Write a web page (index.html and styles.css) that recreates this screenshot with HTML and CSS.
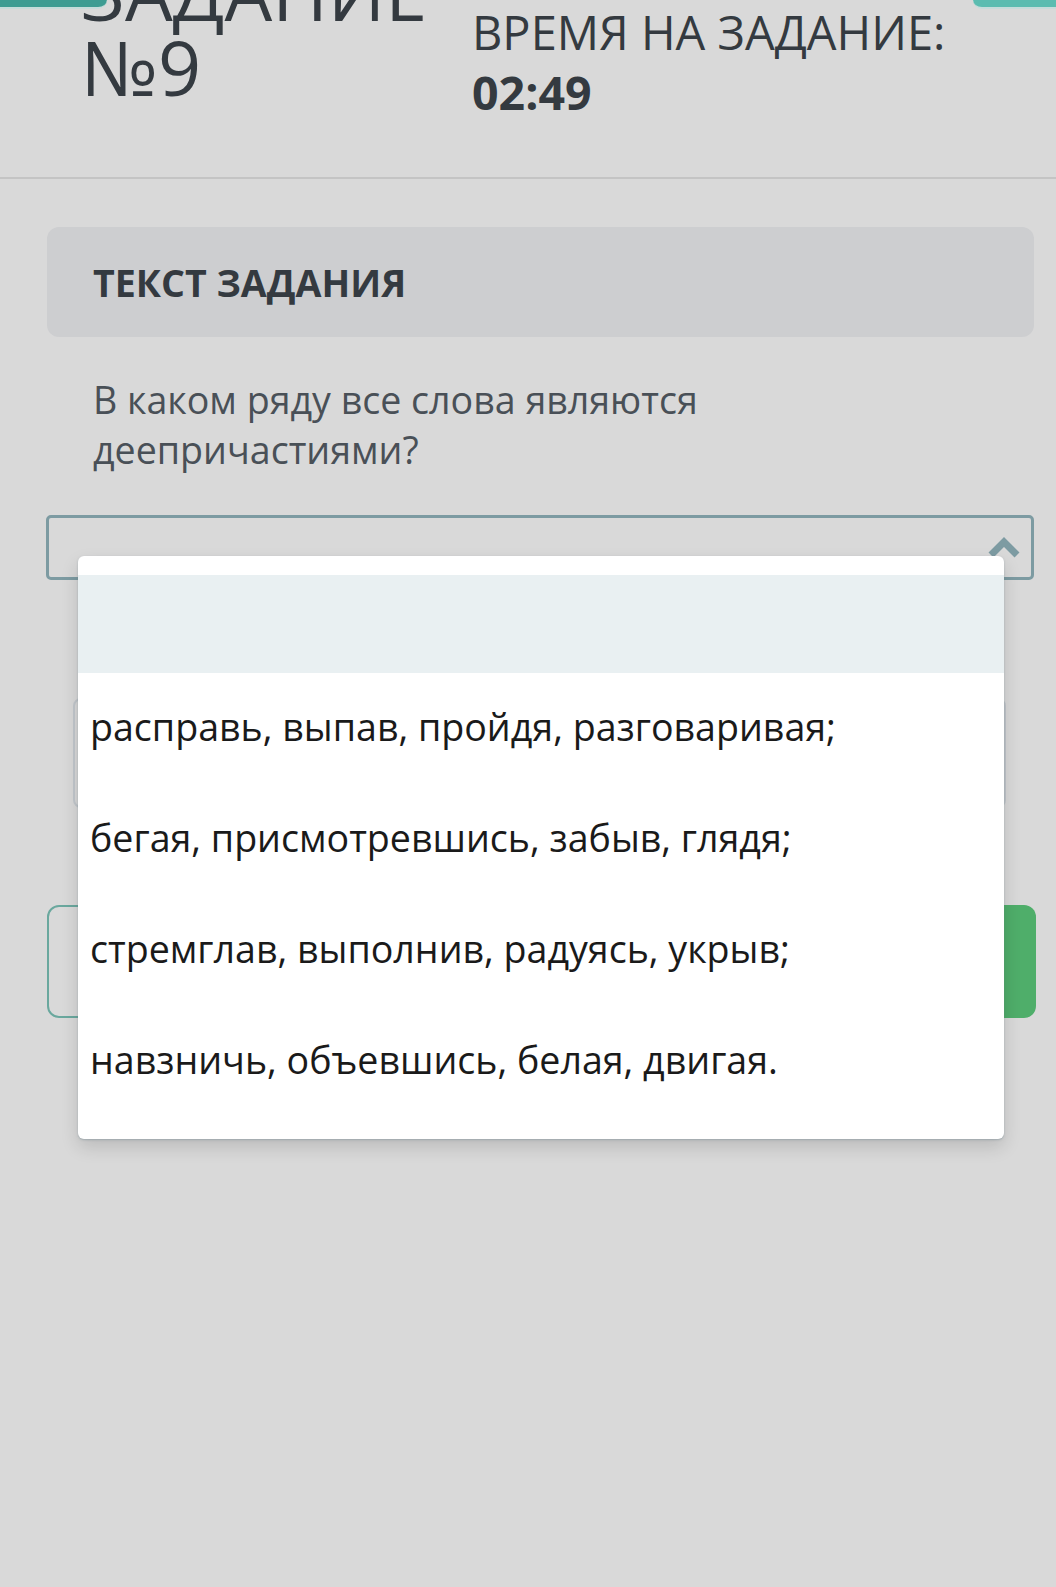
FILE: index.html
```html
<!DOCTYPE html>
<html lang="ru">
<head>
<meta charset="utf-8">
<title>Задание №9</title>
<link rel="stylesheet" href="styles.css">
</head>
<body>
<div class="tab tab-left"></div>
<div class="tab tab-right"></div>
<header class="task-header">
  <h1 class="task-title">ЗАДАНИЕ №9</h1>
  <div class="timer">
    <div class="timer-label">ВРЕМЯ НА ЗАДАНИЕ:</div>
    <div class="timer-value">02:49</div>
  </div>
</header>
<main class="main">
  <div class="section-head">ТЕКСТ ЗАДАНИЯ</div>
  <p class="question">В каком ряду все слова являются деепричастиями?</p>
  <div class="select-wrap">
    <div class="select">
      <svg class="chevron" width="32" height="26" viewBox="0 0 32 26"><polyline points="3,20 16,7 29,20" fill="none" stroke="#7d9ba2" stroke-width="7"/></svg>
    </div>
    <ul class="dropdown">
      <li class="option option-empty"></li>
      <li class="option">расправь, выпав, пройдя, разговаривая;</li>
      <li class="option">бегая, присмотревшись, забыв, глядя;</li>
      <li class="option">стремглав, выполнив, радуясь, укрыв;</li>
      <li class="option">навзничь, объевшись, белая, двигая.</li>
    </ul>
  </div>
  <div class="answer-card"></div>
  <div class="buttons">
    <div class="btn btn-outline"></div>
    <div class="btn btn-green"></div>
  </div>
</main>
</body>
</html>
```
FILE: styles.css
```css
* { box-sizing: border-box; }
html, body {
  margin: 0;
  padding: 0;
}
body {
  background: #d9d9d9;
  font-family: "Open Sans", "Noto Sans", sans-serif;
  color: #343a40;
  min-height: 1587px;
  position: relative;
  overflow: hidden;
}
.tab {
  position: absolute;
  top: 0;
  height: 9px;
  border-bottom: 2px solid #c5dcda;
}
.tab-left {
  left: 0;
  width: 107px;
  background: #3d9c92;
  border-bottom-right-radius: 12px;
}
.tab-right {
  right: 0;
  width: 83px;
  background: #5bbcb0;
  border-bottom-left-radius: 12px;
}
.task-header {
  height: 179px;
  border-bottom: 2px solid #c4c4c4;
  display: flex;
  padding-left: 81px;
}
.task-title {
  flex: 0 0 391px;
  margin: -46px 0 0 0;
  font-size: 75.5px;
  line-height: 75px;
  font-weight: 400;
  color: #343a40;
  position: relative;
  z-index: 1;
}
.timer {
  margin-top: 2px;
  line-height: 60px;
  color: #343a40;
}
.timer-label {
  font-size: 47px;
}
.timer-value {
  font-size: 46.5px;
  font-weight: 700;
}
.main {
  padding: 48px 22px 0 47px;
}
.section-head {
  height: 110px;
  background: #cdced0;
  border-radius: 12px;
  display: flex;
  align-items: center;
  padding-left: 46px;
  font-size: 37.6px;
  font-weight: 700;
  color: #343a40;
}
.question {
  margin: 38px 0 0 0;
  padding-left: 46px;
  max-width: 720px;
  font-size: 37.6px;
  line-height: 50px;
  color: #495057;
}
.select-wrap {
  position: relative;
  margin-top: 40px;
  margin-left: -1px;
}
.select {
  height: 65px;
  border: 3px solid #7d9ba2;
  border-radius: 5px;
  display: flex;
  justify-content: flex-end;
  align-items: center;
  padding-right: 11px;
}
.dropdown {
  position: absolute;
  z-index: 5;
  top: 41px;
  left: 32px;
  width: 926px;
  margin: 0;
  padding: 19px 0 22px 0;
  list-style: none;
  background: #ffffff;
  border-radius: 6px;
  box-shadow: 0 1px 2px rgba(120, 140, 150, 0.5), 0 8px 18px rgba(0, 0, 0, 0.14);
}
.option {
  height: 111px;
  display: flex;
  align-items: center;
  padding: 0 12px 4px 12px;
  font-size: 37.6px;
  color: #1a1a1a;
  white-space: nowrap;
}
.option-empty {
  height: 98px;
  background: #e9f0f2;
}
.answer-card {
  margin: 118px 28px 0 26px;
  height: 110px;
  border: 2px solid #c2c7cc;
  border-radius: 8px;
}
.buttons {
  margin-top: 97px;
  margin-right: -2px;
  display: flex;
  gap: 40px;
}
.btn {
  height: 113px;
  border-radius: 12px;
  flex: 1;
}
.btn-outline {
  border: 2px solid #6aa89e;
}
.btn-green {
  background: #4fae6a;
}
```
